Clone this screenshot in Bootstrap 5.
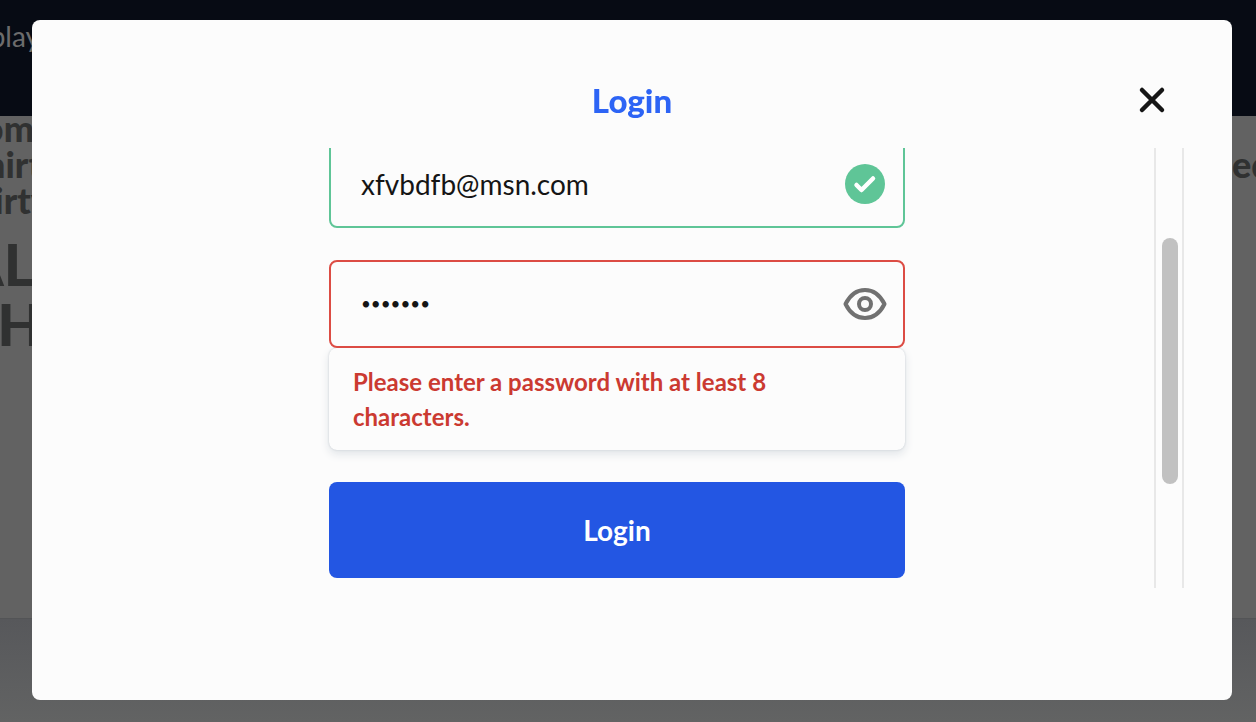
<!DOCTYPE html>
<html lang="en">
<head>
<meta charset="utf-8">
<meta name="viewport" content="width=device-width, initial-scale=1">
<title>Login</title>
<link href="https://cdn.jsdelivr.net/npm/bootstrap@5.3.0/dist/css/bootstrap.min.css" rel="stylesheet">
<style>
body { font-family: Lato, "Open Sans", sans-serif; color: #151515; background: #626262; }
.page-back { min-height: 100vh; color: #303131; background: #5c5d60; }
.site-top { height: 116px; padding-top: 18px; background: #070b14; color: #6c6c6c; font-size: 28px; line-height: 36px; }
.site-main { height: 503px; background: #626262; border-bottom: 1px solid #535456; font-weight: 900; }
.site-foot { background: linear-gradient(#57585b, #626363); }
.cut-col { width: 44px; white-space: nowrap; }
.cut-copy { width: 50px; margin-top: -6px; white-space: nowrap; }
.copy { font-size: 36px; line-height: 36px; }
.copy-head { font-size: 58px; line-height: 60px; margin-top: 16px; }
.copy-right { width: 24px; margin-top: 30px; }
.dialog-wrap { padding: 20px 24px 22px 32px; }
.dialog-card { background: #fcfcfc; border-radius: 8px; padding: 0 48px 112px; }
.dialog-top { height: 128px; padding-top: 32px; }
.dialog-title { font-size: 33px; line-height: 40px; font-weight: 900; color: #2d64f5; }
.close-btn { right: 16px; width: 32px; height: 32px; }
.dialog-scroll { min-height: 0; }
.scroll-track { width: 30px; border: solid #e8e8e8; border-width: 0 2px; padding: 90px 4px 0 0; }
.scroll-thumb { width: 16px; height: 246px; border-radius: 8px; background: #c1c1c1; }
.login-form { width: 576px; gap: 32px; padding-bottom: 10px; }
.login-form .form-control { height: 88px; border-width: 2px; border-radius: 8px; padding: 0 76px 0 30px; font-size: 28px; font-variant-ligatures: none; background: #fcfcfc; color: #151515; box-shadow: none; }
.login-form .field-ok { border-color: #5fc597; }
.login-form .field-bad { border-color: #dc4c44; font-size: 17px; padding-bottom: 2px; }
.field-icon { right: 16px; width: 48px; height: 48px; }
.error-box { border-radius: 8px; padding: 16px 24px; font-size: 24px; line-height: 35px; font-weight: 700; color: #cb3a31; box-shadow: 0 0 2px #c4cad0, 0 4px 10px #dfe3e7; }
.btn-login { height: 96px; border-radius: 8px; background: #2356e3; color: #fff; font-size: 28px; font-weight: 700; }
.btn-login:hover { background: #1c49c6; color: #fff; }
</style>
</head>
<body>
<div class="page-back d-flex flex-column overflow-hidden" aria-hidden="true">
  <header class="site-top"><div class="cut-col d-flex justify-content-end pe-1">play</div></header>
  <main class="site-main d-flex justify-content-between overflow-hidden">
    <div class="cut-copy d-flex flex-column align-items-end">
      <span class="copy pe-3">om</span>
      <span class="copy pe-2">hirt</span>
      <span class="copy">irty</span>
      <span class="copy-head pe-3">AL</span>
      <span class="copy-head mt-0 pe-2">TH</span>
    </div>
    <div class="copy copy-right">ed</div>
  </main>
  <footer class="site-foot flex-grow-1"></footer>
</div>

<div class="dialog-wrap position-fixed top-0 start-0 w-100 h-100" role="dialog" aria-modal="true" aria-labelledby="dialog-title">
  <div class="dialog-card d-flex flex-column h-100">
    <div class="dialog-top position-relative d-flex align-items-center justify-content-center flex-shrink-0">
      <h1 class="dialog-title m-0" id="dialog-title">Login</h1>
      <button type="button" class="close-btn btn p-0 border-0 position-absolute d-flex" aria-label="Close">
        <svg class="w-100 h-100" viewBox="0 0 32 32" fill="none" stroke="#161616" stroke-width="4.500" stroke-linecap="round"><path d="M6 6l20 20M26 6L6 26"/></svg>
      </button>
    </div>
    <div class="dialog-scroll d-flex flex-grow-1 overflow-hidden">
      <div class="flex-grow-1 d-flex flex-column justify-content-end align-items-center overflow-hidden">
        <form class="login-form d-flex flex-column mw-100">
          <div class="position-relative d-flex align-items-center">
            <input class="form-control field-ok" type="email" value="xfvbdfb@msn.com" aria-label="Email">
            <svg class="field-icon position-absolute" viewBox="0 0 48 48"><circle cx="24" cy="24" r="20" fill="#5fc597"/><path d="M15.500 25l5 5L32 18.500" fill="none" stroke="#fff" stroke-width="4.500" stroke-linecap="round" stroke-linejoin="round"/></svg>
          </div>
          <div>
            <div class="position-relative d-flex align-items-center">
              <input class="form-control field-bad" type="password" value="abcdefg" aria-label="Password" aria-describedby="password-error">
              <button type="button" class="field-icon btn p-0 border-0 position-absolute d-flex" aria-label="Show password">
                <svg class="w-100 h-100" viewBox="0 0 48 48" fill="none" stroke="#717171" stroke-width="4" stroke-linejoin="round"><path d="M4.500 24C9 15 16 10 24 10s15 5 19.500 14C39 33 32 38 24 38S9 33 4.500 24z"/><circle cx="24" cy="24" r="6"/></svg>
              </button>
            </div>
            <div class="error-box" id="password-error">Please enter a password with at least 8 characters.</div>
          </div>
          <button type="submit" class="btn btn-login w-100 border-0">Login</button>
        </form>
      </div>
      <div class="scroll-track d-flex justify-content-end flex-shrink-0"><div class="scroll-thumb"></div></div>
    </div>
  </div>
</div>
<script src="https://cdn.jsdelivr.net/npm/bootstrap@5.3.0/dist/js/bootstrap.bundle.min.js"></script>
</body>
</html>
